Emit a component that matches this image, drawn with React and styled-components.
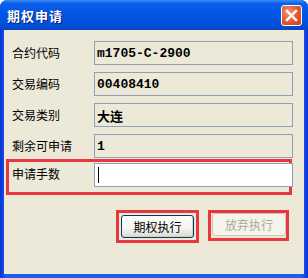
import styled, { createGlobalStyle } from 'styled-components';

const GlobalStyle = createGlobalStyle`
  html, body {
    margin: 0;
    padding: 0;
    background: #ffffff;
  }
  body {
    font-family: 'Noto Sans CJK SC', 'DejaVu Sans', sans-serif;
  }
`;

const Window = styled.div`
  width: 308px;
  height: 278px;
  box-sizing: border-box;
  display: flex;
  flex-direction: column;
  padding: 0 4px 4px;
  background: linear-gradient(90deg, #0831d9 0%, #1c5fe8 2%, #1c5fe8 98%, #0831d9 100%);
  border-radius: 7px 7px 0 0;
  overflow: hidden;
`;

const TitleBar = styled.div`
  height: 30px;
  margin: 0 -4px;
  padding: 0 6px 0 7px;
  display: flex;
  align-items: center;
  justify-content: space-between;
  background: linear-gradient(
    180deg,
    #3d8df7 0%,
    #0a5fea 12%,
    #0056e4 50%,
    #004fd8 85%,
    #0a43c2 100%
  );
`;

const Title = styled.span`
  color: #ffffff;
  font-size: 13px;
  font-weight: bold;
  letter-spacing: 1px;
  text-shadow: 1px 1px 0 #0a1e72;
`;

const CloseButton = styled.div`
  width: 21px;
  height: 21px;
  box-sizing: border-box;
  border: 1px solid #ffffff;
  border-radius: 3px;
  background: radial-gradient(circle at 35% 35%, #f49474 0%, #e0582d 55%, #c8401c 100%);
  display: flex;
  align-items: center;
  justify-content: center;
`;

const Client = styled.div`
  flex: 1;
  background: #ece9d8;
  padding: 11px 11px 0 2px;
  display: flex;
  flex-direction: column;
`;

const Rows = styled.div`
  display: flex;
  flex-direction: column;
  gap: 7px;
  padding-left: 6px;
`;

const Row = styled.div`
  display: grid;
  grid-template-columns: 82px 199px;
  align-items: center;
  height: 24px;
`;

const Label = styled.span`
  font-size: 12px;
  color: #000000;
  line-height: 14px;
`;

const Field = styled.div`
  height: 24px;
  box-sizing: border-box;
  border: 1px solid #8ea0b8;
  background: ${(p) => (p.$editable ? '#ffffff' : '#ece9d8')};
  display: flex;
  align-items: center;
  padding-left: 2px;
`;

const Value = styled.span`
  font-family: ${(p) =>
    p.$cjk
      ? "'Noto Sans CJK SC', sans-serif"
      : "'Liberation Mono', 'DejaVu Sans Mono', monospace"};
  font-size: ${(p) => (p.$cjk ? '13px' : '13px')};
  font-weight: bold;
  color: #000000;
`;

const Caret = styled.span`
  width: 1px;
  height: 16px;
  background: #000000;
  margin-left: 1px;
`;

const Highlight = styled.div`
  border: 3px solid #e8383d;
  padding: ${(p) => p.$pad || '0'};
`;

const InputBox = styled(Highlight)`
  margin-top: 1px;
  width: 286px;
  box-sizing: border-box;
  padding: 1px 0 5px 3px;
`;

const InputRow = styled.div`
  display: grid;
  grid-template-columns: 82px 199px;
  align-items: start;
`;

const InputLabel = styled(Label)`
  padding-top: 4px;
`;

const Actions = styled.div`
  display: flex;
  justify-content: flex-end;
  align-items: flex-start;
  gap: 9px;
  margin-top: 15px;
  padding-right: 4px;
`;

const Button = styled.button`
  width: ${(p) => p.$w || 73}px;
  height: 23px;
  box-sizing: border-box;
  border: 1px solid ${(p) => (p.disabled ? '#c9c7ba' : '#003c74')};
  border-radius: 3px;
  background: ${(p) =>
    p.disabled
      ? '#f5f4ea'
      : 'linear-gradient(180deg, #ffffff 0%, #f4f4f0 60%, #dcd8cc 100%)'};
  font-family: 'Noto Sans CJK SC', sans-serif;
  font-size: 12px;
  color: ${(p) => (p.disabled ? '#aca899' : '#000000')};
  padding: 0;
  display: flex;
  align-items: center;
  justify-content: center;
  box-shadow: ${(p) => (p.disabled ? 'none' : 'inset -1px -1px 0 #d6d0c5')};
`;

const fields = [
  { label: '合约代码', value: 'm1705-C-2900' },
  { label: '交易编码', value: '00408410' },
  { label: '交易类别', value: '大连', cjk: true },
  { label: '剩余可申请', value: '1' },
];

export default function App() {
  return (
    <>
      <GlobalStyle />
      <Window>
        <TitleBar>
          <Title>期权申请</Title>
          <CloseButton>
            <svg width="13" height="13" viewBox="0 0 13 13">
              <path
                d="M2 2 L11 11 M11 2 L2 11"
                stroke="#ffffff"
                strokeWidth="2.4"
                strokeLinecap="square"
              />
            </svg>
          </CloseButton>
        </TitleBar>
        <Client>
          <Rows>
            {fields.map((f) => (
              <Row key={f.label}>
                <Label>{f.label}</Label>
                <Field>
                  <Value $cjk={f.cjk}>{f.value}</Value>
                </Field>
              </Row>
            ))}
          </Rows>
          <InputBox>
            <InputRow>
              <InputLabel>申请手数</InputLabel>
              <Field $editable>
                <Caret />
              </Field>
            </InputRow>
          </InputBox>
          <Actions>
            <Highlight $pad="2px">
              <Button>期权执行</Button>
            </Highlight>
            <Highlight $pad="0 0 2px 1px">
              <Button $w={74} disabled>
                放弃执行
              </Button>
            </Highlight>
          </Actions>
        </Client>
      </Window>
    </>
  );
}
